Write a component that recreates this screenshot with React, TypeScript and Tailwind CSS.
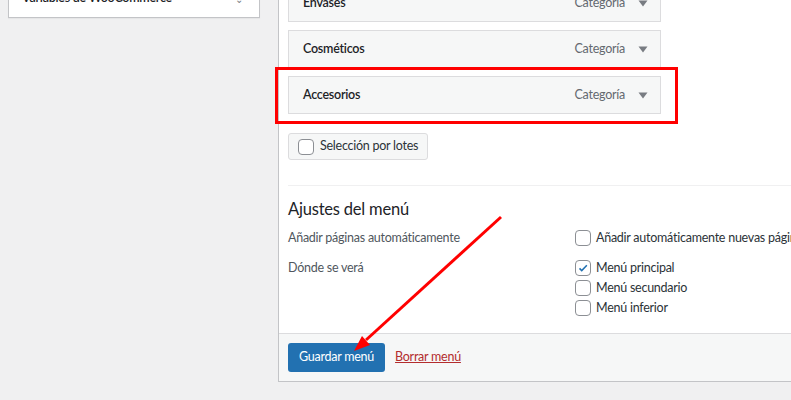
import React from 'react';

const items = ['Envases', 'Cosméticos', 'Accesorios'];

const Checkbox = ({ checked = false }: { checked?: boolean }) => (
  <span className="flex h-4 w-4 shrink-0 items-center justify-center rounded-[4px] border border-[#8c8f94] bg-white">
    {checked && (
      <svg viewBox="0 0 20 20" className="h-[18px] w-[18px]">
        <path d="M5 10.5l3.2 3.2L15.5 6" fill="none" stroke="#2271b1" strokeWidth="2.2" />
      </svg>
    )}
  </span>
);

const Caret = () => (
  <svg viewBox="0 0 10 7" className="h-[7px] w-[10px]">
    <polygon points="0.5,0.5 9.5,0.5 5,6.5" fill="#787c82" />
  </svg>
);

const App = () => {
  return (
    <div
      className="relative flex h-[400px] w-[791px] overflow-hidden bg-[#f0f0f1] text-[12.5px] tracking-[-0.25px] text-[#1d2327]"
      style={{ fontFamily: 'Lato, "Open Sans", sans-serif' }}
    >
      {/* Left column */}
      <div className="ml-[8px] w-[252px] shrink-0">
        <div className="-mt-[22px] flex h-[40px] items-end justify-between border border-[#c3c4c7] bg-white px-[13px] pb-[13px] shadow-[0_1px_1px_rgba(0,0,0,0.04)]">
          <span className="font-semibold leading-none">Variables de WooCommerce</span>
          <span className="mr-[3px] text-[10px] leading-none text-[#787c82]">⌄</span>
        </div>
      </div>

      {/* Main panel */}
      <div className="ml-[18px] flex h-[382px] flex-1 flex-col border-b border-l border-[#c3c4c7] bg-white">
        <div className="flex-1 pl-[9px]">
          <div className="-mt-[16px] flex flex-col gap-[8px]">
            {items.map((name) => (
              <div
                key={name}
                className="flex h-[38px] w-[373px] items-center justify-between border border-[#dcdcde] bg-[#f6f7f7] pl-[14px] pr-[12px]"
              >
                <span className="font-semibold">{name}</span>
                <span className="flex items-center gap-[13px] text-[#646970]">
                  Categoría
                  <Caret />
                </span>
              </div>
            ))}
          </div>

          <div className="mt-[19px] inline-flex h-[27px] items-center gap-[6px] rounded-[3px] border border-[#dcdcde] bg-[#f6f7f7] pl-[9px] pr-[9px]">
            <Checkbox />
            <span className="text-[#2c3338]">Selección por lotes</span>
          </div>

          <div className="mt-[25px] border-t border-[#f0f0f1]" />

          <h3 className="mt-[15px] text-[16.5px] leading-[17px] tracking-[-0.2px] text-[#1d2327]">Ajustes del menú</h3>

          <div className="mt-[12px] grid grid-cols-[287px_1fr] leading-[16px] text-[#50575e]">
            <div>Añadir páginas automáticamente</div>
            <div className="flex items-center gap-[5px] text-[#2c3338]">
              <Checkbox />
              <span className="whitespace-nowrap">Añadir automáticamente nuevas páginas de nivel superior a este menú</span>
            </div>
            <div className="mt-[14px]">Dónde se verá</div>
            <div className="mt-[14px] flex flex-col gap-[4px] text-[#2c3338]">
              <div className="flex items-center gap-[5px]">
                <Checkbox checked />
                <span>Menú principal</span>
              </div>
              <div className="flex items-center gap-[5px]">
                <Checkbox />
                <span>Menú secundario</span>
              </div>
              <div className="flex items-center gap-[5px]">
                <Checkbox />
                <span>Menú inferior</span>
              </div>
            </div>
          </div>
        </div>

        {/* Footer */}
        <div className="flex h-[48px] items-center gap-[10px] border-t border-[#dcdcde] bg-[#f6f7f7] pl-[9px]">
          <button className="h-[29px] rounded-[3px] bg-[#2271b1] px-[11px] text-white">Guardar menú</button>
          <a className="text-[#b32d2e] underline">Borrar menú</a>
        </div>
      </div>

      {/* Highlight */}
      <div className="absolute left-[275px] top-[67px] h-[57px] w-[403px] border-[3px] border-[#ff0000]" />

      {/* Arrow */}
      <svg className="pointer-events-none absolute inset-0 h-[400px] w-[791px]">
        <line x1="501" y1="217" x2="366" y2="340" stroke="#ff0000" strokeWidth="3" />
        <polygon points="354,351 370,345 362,336" fill="#ff0000" />
      </svg>
    </div>
  );
};

export default App;
